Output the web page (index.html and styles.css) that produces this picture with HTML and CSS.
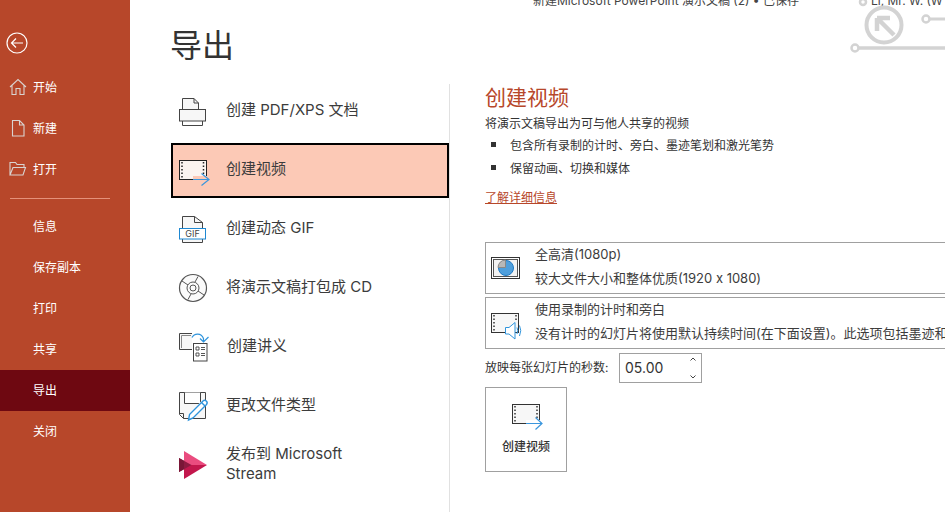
FILE: index.html
```html
<!DOCTYPE html>
<html lang="zh-CN">
<head>
<meta charset="utf-8">
<title>导出</title>
<link rel="stylesheet" href="styles.css">
</head>
<body>
<aside class="sidebar">
  <svg class="back" width="24" height="24" viewBox="0 0 24 24" fill="none" stroke="#fff" stroke-width="1.2"><circle cx="12" cy="12" r="10"/><path d="M6.500 12H18M11 7.500L6.500 12l4.500 4.500"/></svg>
  <nav class="nav nav-top">
    <a class="nav-item"><svg class="nav-icon" width="18" height="18" viewBox="0 0 18 18" fill="none" stroke="#d9d3d0" stroke-width="1.1"><path d="M1 9L9 1.500l8 7.500M3 7.500V16.500H7V10.500H11V16.500H15V7.500"/></svg>开始</a>
    <a class="nav-item"><svg class="nav-icon" width="18" height="18" viewBox="0 0 18 18" fill="none" stroke="#d9d3d0" stroke-width="1.1"><path d="M3.500 1.500H10.500L15 6V17H3.500ZM10.500 1.500V6H15"/></svg>新建</a>
    <a class="nav-item"><svg class="nav-icon" width="18" height="18" viewBox="0 0 18 18" fill="none" stroke="#d9d3d0" stroke-width="1.1"><path d="M1 15V2.500H6.500L8 4.500H15V7M1 15L4 7.500H16.500L14 15Z"/></svg>打开</a>
  </nav>
  <div class="nav-divider"></div>
  <nav class="nav">
    <a class="nav-item nav-plain">信息</a>
    <a class="nav-item nav-plain">保存副本</a>
    <a class="nav-item nav-plain">打印</a>
    <a class="nav-item nav-plain">共享</a>
    <a class="nav-item nav-plain is-active">导出</a>
    <a class="nav-item nav-plain">关闭</a>
  </nav>
</aside>

<main class="content">
  <div class="doc-title">新建Microsoft PowerPoint 演示文稿 (2) • 已保存</div>
  <div class="user-name">Li, Mr. W. (W</div>
  <svg class="circuit" width="100" height="60" viewBox="0 0 100 60" fill="none" stroke="#d3d3d3">
    <circle cx="39" cy="25" r="17.500" stroke-width="4"/>
    <path d="M32 18H45M32 18V31M32.500 18.500L49 35" stroke-width="4.500"/>
    <circle cx="18" cy="2" r="3" stroke-width="2.500"/>
    <circle cx="81" cy="19" r="3.500" stroke-width="2.500"/>
    <path d="M85 19H100" stroke-width="3"/>
    <circle cx="10" cy="48" r="3.500" stroke-width="2.500"/>
    <path d="M14 48H100" stroke-width="3.500"/>
  </svg>

  <h1 class="page-title">导出</h1>

  <div class="columns">
    <ul class="export-list">
      <li class="export-item">
        <svg class="export-icon" width="32" height="32" viewBox="0 0 32 32" fill="none" stroke="#444" stroke-width="1"><path fill="#f7f7f7" d="M5.500 14V3.500H17L21.500 8V14"/><path d="M17 3.500V8H21.500"/><rect x="2.500" y="14.500" width="26" height="11.500" fill="#f7f7f7"/><path d="M5.500 26V30.500H25.500V26"/></svg>
        <span class="export-label">创建 PDF/XPS 文档</span>
      </li>
      <li class="export-item is-selected">
        <svg class="export-icon" width="33" height="32" viewBox="0 0 33 32" fill="none" stroke="#222" stroke-width="1"><rect x="2.500" y="6.500" width="27" height="19" fill="#fbf4f0"/><path d="M5 8v16M26.500 8v12" stroke-width="1.500" stroke-dasharray="1.500 2"/><path fill="#fcc9b6" stroke="none" d="M16 22h15v4H16z"/><path d="M16 25.500H32M24.500 19.500L32 25.500L24.500 31.500" stroke="#3a96dd" stroke-width="1.200"/></svg>
        <span class="export-label">创建视频</span>
      </li>
      <li class="export-item">
        <svg class="export-icon" width="32" height="32" viewBox="0 0 32 32" fill="none" stroke="#444" stroke-width="1"><path fill="#f7f7f7" d="M5.500 15V3.500H17.500L25.500 9.500V15M5.500 25.500V29.500H25.500V25.500"/><path d="M17.500 3.500V9.500H25.500"/><rect x="2.500" y="15.500" width="26" height="10.500" fill="#fff" stroke="#1e88d2"/><text class="gif-text" x="15.500" y="24" stroke="none" fill="#444">GIF</text></svg>
        <span class="export-label">创建动态 GIF</span>
      </li>
      <li class="export-item">
        <svg class="export-icon" width="32" height="32" viewBox="0 0 32 32" fill="none" stroke="#555" stroke-width="1"><circle cx="16" cy="16" r="13.500" stroke-width="1.200" fill="#fafafa"/><circle cx="16" cy="16" r="6"/><circle cx="16" cy="16" r="3"/><path d="M5 9L11 13M21 19L27 23M21 4.500L18 10M14 22L11 27.500"/></svg>
        <span class="export-label">将演示文稿打包成 CD</span>
      </li>
      <li class="export-item">
        <svg class="export-icon" width="33" height="32" viewBox="0 0 33 32" fill="none" stroke="#444" stroke-width="1"><path fill="#f7f7f7" d="M15 18.500H2.500V2.500H15"/><path d="M4.500 17V4.500H14" stroke="#888"/><rect x="16.500" y="12.500" width="13.500" height="17.500" fill="#fff"/><path d="M19 16h3v3h-3zM19 22h3v3h-3zM24 16.500h4M24 18.500h4M24 22.500h4M24 24.500h4" stroke-width=".9"/><path d="M15 6.500C17 2.500 24 1 26.500 7.500V10M23 7.500L26.500 11L31.500 6" stroke="#2f94dc" stroke-width="1.200"/></svg>
        <span class="export-label">创建讲义</span>
      </li>
      <li class="export-item">
        <svg class="export-icon" width="32" height="32" viewBox="0 0 32 32" fill="none" stroke="#444" stroke-width="1"><path fill="#f7f7f7" d="M2.500 2.500H28.500V28.500H6.500L2.500 24.500Z"/><path d="M6.500 28.500V23.500H2.500"/><path fill="#fff" d="M7.500 2.500V13.500H23.500V2.500"/><path stroke="#fff" stroke-width="5" d="M12 27L27 12"/><path fill="#fff" stroke="#2f94dc" stroke-width="1.400" d="M12.500 24.500L26 11C28 9 31.500 12 29.500 14.500L16 28L11.500 30Z"/><path stroke="#2f94dc" stroke-width="1.400" d="M24.500 12.500L28 16"/></svg>
        <span class="export-label">更改文件类型</span>
      </li>
      <li class="export-item">
        <svg class="export-icon" width="32" height="32" viewBox="0 0 32 32"><path fill="#ea4c7f" d="M7 2L30 16H7Z"/><path fill="#c3174d" d="M7 30L30 16H7Z"/><path fill="#8e1a41" d="M2 9L14.500 16L2 23Z"/><path fill="#7a1637" d="M2 9L7 11.800V20.200L2 23Z"/></svg>
        <span class="export-label">发布到 Microsoft<br>Stream</span>
      </li>
    </ul>

    <section class="detail">
      <h2 class="detail-title">创建视频</h2>
      <p class="detail-desc">将演示文稿导出为可与他人共享的视频</p>
      <ul class="bullets">
        <li>包含所有录制的计时、旁白、墨迹笔划和激光笔势</li>
        <li>保留动画、切换和媒体</li>
      </ul>
      <a class="more-link">了解详细信息</a>

      <div class="option option-first">
        <svg class="option-icon" width="30" height="24" viewBox="0 0 30 24" fill="none" stroke="#333" stroke-width="1"><rect x=".5" y="1.500" width="28" height="21"/><rect x="2.500" y="3.500" width="24" height="17" fill="#f2f2f2" stroke="#555"/><circle cx="15" cy="12" r="7.500" fill="#4f9fdc" stroke="#1e78c2"/><path d="M14.500 11.500V4A7.500 7.500 0 0 0 7 11.500Z" fill="#b8b8b8" stroke="#888"/></svg>
        <div class="option-text">
          <div class="option-line">全高清(1080p)</div>
          <div class="option-line">较大文件大小和整体优质(1920 x 1080)</div>
        </div>
      </div>
      <div class="option">
        <svg class="option-icon" width="32" height="28" viewBox="0 0 32 28" fill="none" stroke="#333" stroke-width="1"><rect x=".5" y="1.500" width="27" height="19" fill="#f7f7f7"/><path d="M3 3v16M25 3v6" stroke-width="1.500" stroke-dasharray="1.500 2"/><path fill="#fff" stroke="#2f94dc" d="M14.500 15.500H18L24 10.500V27L18 22H14.500Z"/><path stroke="#2f94dc" d="M26 15.500Q27.500 18.500 26 22M28.500 13.500Q31 18.500 28.500 24"/></svg>
        <div class="option-text">
          <div class="option-line">使用录制的计时和旁白</div>
          <div class="option-line">没有计时的幻灯片将使用默认持续时间(在下面设置)。此选项包括墨迹和激光笔势。</div>
        </div>
      </div>

      <div class="seconds-row">
        <span class="seconds-label">放映每张幻灯片的秒数:</span>
        <div class="spinner">
          <span class="spinner-value">05.00</span>
          <svg class="spinner-arrows" width="8" height="24" viewBox="0 0 8 24" fill="none" stroke="#444" stroke-width="1"><path d="M1.500 4.500L4 2L6.500 4.500M1.500 19.500L4 22L6.500 19.500"/></svg>
        </div>
      </div>

      <button class="create-btn" type="button">
        <svg class="create-icon" width="32" height="26" viewBox="0 0 32 26" fill="none" stroke="#333" stroke-width="1"><rect x=".5" y=".5" width="27" height="19" fill="#f7f7f7"/><path d="M3 2v16M25 2v12" stroke-width="1.500" stroke-dasharray="1.500 2"/><path fill="#fff" stroke="none" d="M14 16h15v4H14z"/><path d="M14 19.500H30M23.500 13.500L30 19.500L23.500 25.500" stroke="#3a96dd" stroke-width="1.200"/></svg>
        <span>创建视频</span>
      </button>
    </section>
  </div>
</main>
</body>
</html>
```

FILE: styles.css
```css
* { box-sizing: border-box; }

html, body { height: 100%; }

body {
  margin: 0;
  width: 945px;
  height: 512px;
  overflow: hidden;
  display: flex;
  background: #fff;
  color: #333;
  font-family: "Inter", "Noto Sans CJK SC", sans-serif;
  font-size: 12px;
}

/* Sidebar */
.sidebar {
  flex: 0 0 130px;
  background: #b7472a;
  color: #fff;
  padding-top: 31px;
}

.back { display: block; margin: 0 0 11px 5px; }

.nav { display: flex; flex-direction: column; }

.nav-item {
  height: 41px;
  display: flex;
  align-items: center;
  padding-left: 33px;
  font-size: 12px;
  color: #fff;
}

.nav-plain { padding-bottom: 3px; }

.nav-top .nav-item { position: relative; padding-left: 9px; gap: 6px; }

.nav-divider {
  height: 1px;
  background: #e5917a;
  margin: 9px 20px 7px 10px;
}

.is-active { background: #6e0811; }

/* Main */
.content {
  position: relative;
  flex: 1;
  min-width: 0;
  padding-left: 40px;
}

.doc-title,
.user-name {
  position: absolute;
  bottom: calc(100% - 9px);
  font-size: 12px;
  line-height: 16px;
  white-space: nowrap;
  color: #444;
}

.doc-title { left: 403px; }
.user-name { left: 741px; }

.circuit { position: absolute; left: 715px; top: 0; }

.page-title {
  margin: 0;
  height: 84px;
  padding-top: 25px;
  font-size: 32px;
  line-height: 42px;
  font-weight: 400;
  color: #333;
}

.columns { display: flex; align-items: stretch; height: 428px; margin-left: 1px; }

/* Export list */
.export-list {
  flex: 0 0 279px;
  margin: 0;
  padding: 0;
  list-style: none;
  border-right: 1px solid #e1e1e1;
  display: flex;
  flex-direction: column;
  gap: 4px;
}

.export-item {
  flex: 0 0 55px;
  width: 278px;
  display: flex;
  padding: 0 4px;
  border: 2px solid transparent;
}

.export-icon { flex: none; margin-top: 9px; }

.export-label {
  align-self: center;
  margin: 0 0 3px 17px;
  font-size: 15px;
  line-height: 20px;
  color: #3c3c3c;
}

.is-selected .export-icon { margin-right: -1px; }

.is-selected { background: #fcc9b6; border-color: #000; }

.gif-text {
  font-family: "Inter", sans-serif;
  font-size: 9px;
  text-anchor: middle;
}

/* Detail */
.detail {
  flex: none;
  width: 640px;
  padding-left: 35px;
}

.detail-title {
  margin: 0;
  font-size: 21px;
  line-height: 27px;
  font-weight: 400;
  color: #b7472a;
}

.detail-desc {
  margin: 4px 0 0;
  font-size: 12px;
  line-height: 18px;
  color: #333;
}

.bullets { margin: 0; padding: 0; list-style: none; }

.bullets li {
  height: 23px;
  display: flex;
  align-items: center;
  padding-left: 25px;
  position: relative;
  font-size: 12px;
  color: #333;
}

.bullets li::before {
  content: "";
  position: absolute;
  left: 6px;
  top: 9px;
  width: 5px;
  height: 5px;
  background: #333;
}

.more-link {
  display: block;
  margin-top: 10px;
  font-size: 12px;
  line-height: 18px;
  color: #b7472a;
  text-decoration: underline;
}

.option {
  height: 52px;
  margin-top: 3px;
  border: 1px solid #a0a0a0;
  display: flex;
  align-items: center;
  padding-left: 5px;
  white-space: nowrap;
}

.option-first { margin-top: 35px; }

.option-icon { flex: none; }

.option-first .option-icon { margin-right: 14px; }

.option:not(.option-first) .option-icon { margin-right: 12px; margin-top: 6px; }

.option-text { display: flex; flex-direction: column; gap: 6px; margin-top: -4px; }

.option-line { font-size: 13px; line-height: 18px; color: #3c3c3c; }

.seconds-row {
  display: flex;
  align-items: center;
  gap: 10px;
  margin-top: 3px;
  height: 31px;
}

.seconds-label { font-size: 12px; color: #333; width: 124px; white-space: nowrap; padding-bottom: 2px; }

.spinner {
  width: 83px;
  height: 30px;
  border: 1px solid #a0a0a0;
  display: flex;
  align-items: center;
  justify-content: space-between;
  padding: 0 4px 0 5px;
}

.spinner-value { font-size: 14px; color: #333; }

.create-btn {
  display: flex;
  flex-direction: column;
  align-items: center;
  margin-top: 4px;
  padding: 16px 0 0 4px;
  width: 82px;
  height: 85px;
  background: #fff;
  border: 1px solid #a0a0a0;
  font: inherit;
  font-size: 12px;
  font-weight: 500;
  color: #333;
}

.create-icon { flex: none; margin-bottom: 8px; }

.create-btn span { margin-left: -4px; line-height: 18px; }
```
